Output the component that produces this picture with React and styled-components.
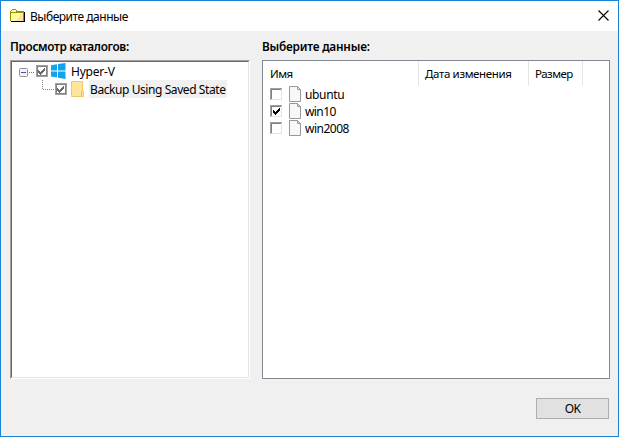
import React from 'react';
import styled, { createGlobalStyle } from 'styled-components';

const Global = createGlobalStyle`
  * { box-sizing: border-box; }
  body { margin: 0; background: #f0f0f0; }
`;

const Window = styled.div`
  width: 619px;
  height: 437px;
  display: flex;
  flex-direction: column;
  border: 1px solid #1883d7;
  background: #f0f0f0;
  color: #000;
  font: 12px/17px 'Noto Sans', sans-serif;
  overflow: hidden;
`;

const TitleBar = styled.header`
  height: 30px;
  flex: none;
  display: flex;
  align-items: center;
  justify-content: space-between;
  padding: 0 9px 0 9px;
  background: #fff;
`;

const TitleGroup = styled.div`
  display: flex;
  align-items: center;
  gap: 4px;
`;

const Label = styled.span`
  white-space: nowrap;
  font-size: ${(p) => p.$size || 12}px;
  font-weight: ${(p) => (p.$bold ? 600 : 400)};
  letter-spacing: ${(p) => p.$track || 0}px;
`;

const CloseButton = styled.button`
  width: 11px;
  height: 11px;
  margin-top: -2px;
  padding: 0;
  border: 0;
  background: none;
  display: flex;
`;

const Body = styled.main`
  display: grid;
  grid-template-columns: 240px 348px;
  column-gap: 12px;
  padding: 7px 9px 0;
`;

const Column = styled.section`
  display: flex;
  flex-direction: column;
`;

const Caption = styled.div`
  height: 22px;
  display: flex;
`;

const TreePanel = styled.div`
  height: 319px;
  border: 1px solid;
  border-color: #a0a0a0 #fff #fff #a0a0a0;
`;

const TreeInner = styled.div`
  height: 100%;
  padding: 0 0 0 7px;
  background: #fff;
  border: 1px solid;
  border-color: #696969 #e3e3e3 #e3e3e3 #696969;
`;

const TreeRow = styled.div`
  height: 18px;
  display: flex;
  align-items: center;
  padding-left: ${(p) => p.$indent || 0}px;
`;

const TreeIconSlot = styled.div`
  width: 18px;
  height: 16px;
  display: flex;
  flex: none;
  padding-left: ${(p) => p.$pad}px;
`;

const TreeText = styled.div`
  height: 18px;
  display: flex;
  align-items: center;
  margin-left: 3px;
  padding: 0 1px;
  background: ${(p) => (p.$selected ? '#f0f0f0' : 'transparent')};
`;

const ListPanel = styled.div`
  height: 319px;
  background: #fff;
  border: 1px solid #828790;
`;

const HeaderRow = styled.div`
  height: 25px;
  display: flex;
`;

const HeaderCell = styled.div`
  width: ${(p) => p.$width}px;
  padding: 4px 0 0 ${(p) => p.$pad}px;
  border-right: 1px solid #e5e5e5;
`;

const FileRow = styled.div`
  height: 17px;
  display: flex;
  align-items: center;
  padding-left: 7px;
`;

const FileIconSlot = styled.div`
  display: flex;
  margin: 0 3px 1px 6px;
`;

const Footer = styled.footer`
  display: flex;
  justify-content: flex-end;
  padding: 19px 9px 0 0;
`;

const OkButton = styled.button`
  width: 73px;
  height: 21px;
  padding: 0;
  border: 1px solid #adadad;
  background: #e1e1e1;
  color: #000;
  font: inherit;
  line-height: 18px;
`;

const TitleFolder = () => (
  <svg width="16" height="16" shapeRendering="crispEdges">
    <path d="M2 1h4v1h1v1h7v10H0V3h1V2h1z" fill="#949400" />
    <path d="M2 2h4v1H2zM1 3h5v1H1zM1 5h12v8H1z" fill="#ffff9c" />
    <path d="M10 6h3v7H5v-1h2v-2h2V8h1z" fill="#ffe3a0" />
    <path d="M14 4h1v10H1v-1h13z" fill="#000" />
  </svg>
);

const tick = 'M2 5h1v1h1v1h1v-1h1v-1h1v-1h1v-1h1v3h-1v1h-1v1h-1v1h-1v1h-1v-1h-1v-1h-1z';

const Check = ({ on }) => (
  <svg width="13" height="13" shapeRendering="crispEdges">
    <path d="M0 0h12v12H0z" fill="#e3e3e3" />
    <path d="M0 0h12v1H1v11H0z" fill="#a0a0a0" />
    <path d="M1 1h10v1H2v9H1z" fill="#808080" />
    <path d="M2 2h9v9H2z" fill="#fff" />
    {on && <path d={tick} fill="#000" transform="translate(1 0)" />}
  </svg>
);

const TreeCheck = () => (
  <svg width="13" height="13" shapeRendering="crispEdges">
    <path d="M0 0h12v12H0z" fill="#a0a0a0" />
    <path d="M1 1h10v10H1z" fill="#808080" />
    <path d="M2 2h8v8H2z" fill="#fff" />
    <path d={tick} fill="#696969" />
  </svg>
);

const WindowsLogo = () => (
  <svg width="15" height="16" viewBox="0 0 15 16">
    <path d="M0 2.3 6 1.3V7.4H0zM7 1.1 14.5 0V7.4H7zM0 8.4H6v6L0 13.5zM7 8.4h7.5V16L7 14.8z" fill="#12a3ee" />
  </svg>
);

const Branch = () => (
  <svg width="17" height="18">
    <rect x=".5" y="6.500" width="8" height="8" rx="1" fill="#f4f4f4" stroke="#919191" />
    <path d="M2 10h5v1H2z" fill="#3b56a8" />
    <path d="M10 10.500h6" stroke="#808080" strokeDasharray="1 1" />
  </svg>
);

const Elbow = () => (
  <svg width="13" height="18" shapeRendering="crispEdges">
    <path d="M.5 0v10M1 9.5h11" fill="none" stroke="#808080" strokeDasharray="1 1" />
  </svg>
);

const Folder = () => (
  <svg width="14" height="16">
    <path d="M.5.5h11v9.5h1v5.500H.5z" fill="#ffe599" stroke="#eccb6b" />
    <path d="M10.500 15v-4.500l1-1" fill="none" stroke="#e6c35c" />
  </svg>
);

const FileIcon = () => (
  <svg width="13" height="16">
    <path d="M.5.5h8l3 3v12H.5z" fill="#f8f8f8" stroke="#999" />
    <path d="M8.500.5v3h3" fill="none" stroke="#999" />
  </svg>
);

const CloseIcon = () => (
  <svg width="11" height="11">
    <path d="M.5.5l10 10M10.5.5l-10 10" stroke="#000" strokeWidth="1.1" />
  </svg>
);

const files = [
  { name: 'ubuntu', on: false, track: -0.35 },
  { name: 'win10', on: true, track: -0.6 },
  { name: 'win2008', on: false, track: -0.5 },
];

export default function App() {
  return (
    <Window>
      <Global />
      <TitleBar>
        <TitleGroup>
          <TitleFolder />
          <Label $track={-0.48}>Выберите данные</Label>
        </TitleGroup>
        <CloseButton aria-label="Закрыть"><CloseIcon /></CloseButton>
      </TitleBar>
      <Body>
        <Column>
          <Caption><Label $bold $size={11.8} $track={-0.35}>Просмотр каталогов:</Label></Caption>
          <TreePanel>
            <TreeInner>
              <TreeRow>
                <Branch />
                <TreeCheck />
                <TreeIconSlot $pad={2}><WindowsLogo /></TreeIconSlot>
                <TreeText><Label $track={-0.2}>Hyper-V</Label></TreeText>
              </TreeRow>
              <TreeRow $indent={23}>
                <Elbow />
                <TreeCheck />
                <TreeIconSlot $pad={3}><Folder /></TreeIconSlot>
                <TreeText $selected><Label $track={-0.42}>Backup Using Saved State</Label></TreeText>
              </TreeRow>
            </TreeInner>
          </TreePanel>
        </Column>
        <Column>
          <Caption><Label $bold $size={11.8} $track={-0.2}>Выберите данные:</Label></Caption>
          <ListPanel>
            <HeaderRow>
              <HeaderCell $width={156} $pad={7}><Label $size={11.5} $track={-0.55}>Имя</Label></HeaderCell>
              <HeaderCell $width={110} $pad={6}><Label $size={11.5} $track={-0.36}>Дата изменения</Label></HeaderCell>
              <HeaderCell $width={54} $pad={6}><Label $size={11.5} $track={-0.5}>Размер</Label></HeaderCell>
            </HeaderRow>
            {files.map((f) => (
              <FileRow key={f.name}>
                <Check on={f.on} />
                <FileIconSlot><FileIcon /></FileIconSlot>
                <Label $track={f.track}>{f.name}</Label>
              </FileRow>
            ))}
          </ListPanel>
        </Column>
      </Body>
      <Footer><OkButton><Label $track={-0.7}>OK</Label></OkButton></Footer>
    </Window>
  );
}
